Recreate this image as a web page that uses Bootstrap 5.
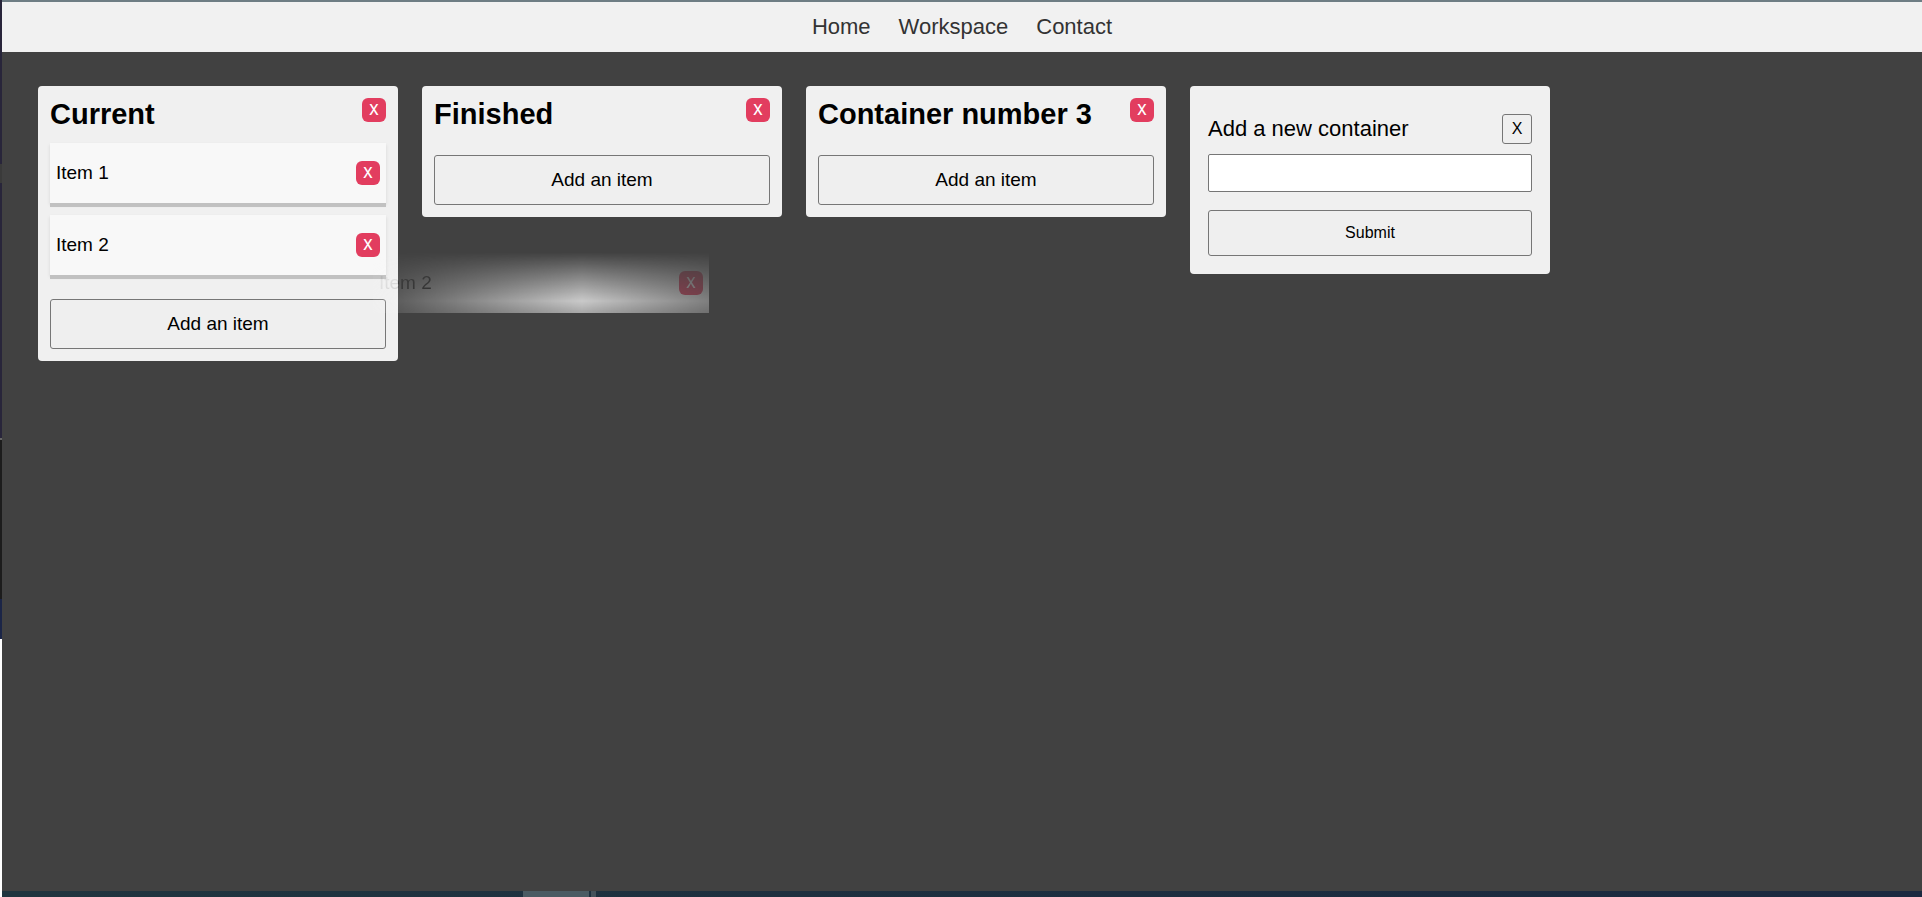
<!DOCTYPE html>
<html lang="en">
<head>
<meta charset="utf-8">
<meta name="viewport" content="width=device-width, initial-scale=1">
<title>Workspace</title>
<link href="https://cdn.jsdelivr.net/npm/bootstrap@5.3.0/dist/css/bootstrap.min.css" rel="stylesheet">
<style>
  body { font-family: "Liberation Sans", Arial, sans-serif; background: #414141; color: #000; }
  .app { border-top: 2px solid #6e7d84; }
  .edge-left { width: 2px; background: linear-gradient(#28253a 0 164px, #3a3a3a 164px 183px, #28253a 183px 438px, #666 438px 440px, #1c1c1c 440px 599px, #1b2547 599px 639px, #fff 639px); }
  .site-nav { height: 50px; background: #f1f1f1; }
  .site-nav .navbar-nav .nav-link { color: #333; font-size: 22px; line-height: 24px; padding: 0; }
  .site-nav .navbar-nav { gap: 28px; }
  .board { gap: 24px; padding: 34px 36px; }
  .panel { width: 360px; background: #f0f0f0; border-radius: 4px; padding: 12px; }
  .panel-title { font-size: 29px; line-height: 32px; margin: 0; font-weight: 700; }
  .panel-head { height: 45px; }
  .task { height: 60px; margin-bottom: 12px; padding: 0 6px; background: #f8f8f8; font-size: 19px; box-shadow: 0 4px 0 #c1c1c1, 0 2px 3px #d4d4d4; }
  .del { width: 24px; height: 24px; border: 0; border-radius: 6px; background: #e23d5f; color: #fff; font-family: Inter, "Liberation Sans", sans-serif; font-size: 14px; font-weight: 500; line-height: 24px; padding: 0; }
  .plain { border: 1px solid #767676; border-radius: 3px; background: #efefef; color: #000; padding: 0; }
  .add { height: 50px; font-size: 19px; margin-top: 12px; }
  .new-panel { padding: 28px 18px 18px; }
  .new-panel label { font-size: 22px; line-height: 28px; }
  .new-panel .close { width: 30px; height: 30px; font-size: 16px; line-height: 26px; }
  .new-panel input { height: 38px; border: 1px solid #767676; border-radius: 2px; background: #fff; margin: 10px 0 18px; }
  .new-panel .send { height: 46px; font-size: 16px; }
  /* Translucent copy of the item being dragged: fades out sideways, then up and down */
  .drag { position: absolute; left: 371px; top: 201px; width: 336px; z-index: 2; opacity: .75;
    -webkit-mask-image: linear-gradient(90deg, rgba(0,0,0,.1), #000 209px, rgba(0,0,0,.45));
    mask-image: linear-gradient(90deg, rgba(0,0,0,.1), #000 209px, rgba(0,0,0,.45)); }
  .drag .task { margin: 0; box-shadow: none;
    -webkit-mask-image: linear-gradient(rgba(0,0,0,.01), #000 48px, rgba(0,0,0,.75));
    mask-image: linear-gradient(rgba(0,0,0,.01), #000 48px, rgba(0,0,0,.75)); }
  .taskbar { height: 6px; background: linear-gradient(90deg, #20353f, #1b2940); }
  .taskbar span { margin-left: 521px; width: 66px; background: #4b5b63; }
  .taskbar i { margin-left: 2px; width: 5px; background: #44525b; }
</style>
</head>
<body>
<div class="d-flex min-vh-100">
  <div class="edge-left flex-shrink-0"></div>
  <div class="app d-flex flex-column flex-grow-1">
    <nav class="site-nav navbar navbar-expand p-0 justify-content-center">
      <div class="navbar-nav">
        <a class="nav-link" href="#">Home</a>
        <a class="nav-link" href="#">Workspace</a>
        <a class="nav-link" href="#">Contact</a>
      </div>
    </nav>
    <main class="board d-flex flex-wrap align-items-start flex-grow-1 align-content-start position-relative">
      <section class="panel">
        <div class="panel-head d-flex justify-content-between align-items-start">
          <h2 class="panel-title">Current</h2><button class="del" type="button">X</button>
        </div>
        <div class="task d-flex align-items-center justify-content-between"><span>Item 1</span><button class="del" type="button">X</button></div>
        <div class="task d-flex align-items-center justify-content-between"><span>Item 2</span><button class="del" type="button">X</button></div>
        <button class="add plain w-100" type="button">Add an item</button>
      </section>
      <section class="panel">
        <div class="panel-head d-flex justify-content-between align-items-start">
          <h2 class="panel-title">Finished</h2><button class="del" type="button">X</button>
        </div>
        <button class="add plain w-100" type="button">Add an item</button>
      </section>
      <section class="panel">
        <div class="panel-head d-flex justify-content-between align-items-start">
          <h2 class="panel-title">Container number 3</h2><button class="del" type="button">X</button>
        </div>
        <button class="add plain w-100" type="button">Add an item</button>
      </section>
      <form class="panel new-panel">
        <div class="d-flex justify-content-between align-items-center">
          <label for="container-name">Add a new container</label><button class="close plain" type="button">X</button>
        </div>
        <input class="w-100 d-block px-2" id="container-name" type="text">
        <button class="send plain w-100" type="button">Submit</button>
      </form>
      <div class="drag"><div class="task d-flex align-items-center justify-content-between"><span>Item 2</span><button class="del" type="button">X</button></div></div>
    </main>
    <div class="taskbar d-flex"><span></span><i></i></div>
  </div>
</div>
<script src="https://cdn.jsdelivr.net/npm/bootstrap@5.3.0/dist/js/bootstrap.bundle.min.js"></script>
</body>
</html>
